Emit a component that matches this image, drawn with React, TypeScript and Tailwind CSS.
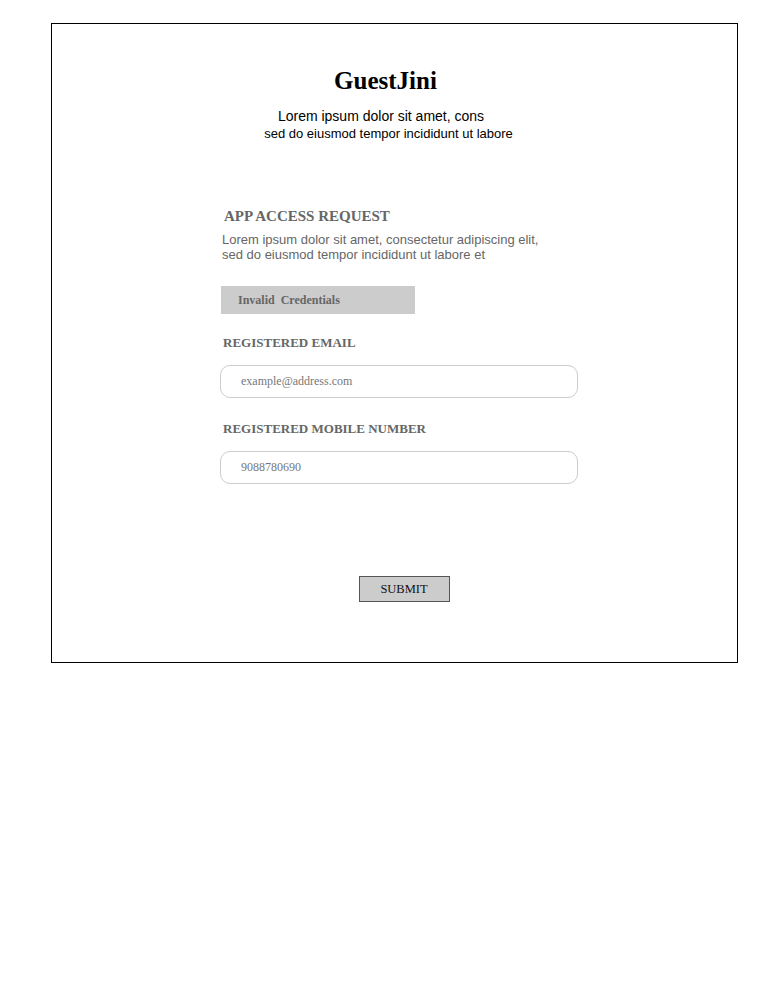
import React from 'react';

export default function App() {
  return (
    <div className="w-[783px] h-[1000px] bg-white pt-[23px] pl-[51px]">
      <div className="w-[687px] h-[640px] border border-black flex flex-col">
        <div className="flex flex-col items-center pt-[41px] pr-[12px]">
          <h1 className="font-['Liberation_Serif',serif] font-bold text-[25px] leading-[32px] text-black ml-[-6px]">GuestJini</h1>
          <p className="font-['Liberation_Sans',sans-serif] text-[14px] leading-[18px] mt-[10px] text-black ml-[-15px]">Lorem ipsum dolor sit amet, cons</p>
          <p className="font-['Liberation_Sans',sans-serif] text-[13px] leading-[18px] text-black">sed do eiusmod tempor incididunt ut labore</p>
        </div>

        <div className="flex flex-col pl-[168px] pt-[64px]">
          <h2 className="font-['Liberation_Serif',serif] font-bold text-[15px] leading-[18px] text-[#666] ml-[4px]">APP ACCESS REQUEST</h2>
          <p className="font-['Liberation_Sans',sans-serif] text-[13px] leading-[15px] text-[#666] mt-[7px] ml-[2px]">
            Lorem ipsum dolor sit amet, consectetur adipiscing elit,<br />
            sed do eiusmod tempor incididunt ut labore et
          </p>
          <div className="w-[194px] h-[28px] bg-[#ccc] mt-[24px] ml-[1px] flex items-center pl-[17px]">
            <span className="font-['Liberation_Serif',serif] font-bold text-[12px] text-[#666] whitespace-pre">Invalid  Credentials</span>
          </div>

          <label className="font-['Liberation_Serif',serif] font-bold text-[13px] leading-[16px] text-[#666] mt-[21px] ml-[3px]">REGISTERED EMAIL</label>
          <input
            className="w-[358px] h-[33px] mt-[14px] rounded-[10px] border border-[#ccc] pl-[20px] font-['Liberation_Serif',serif] text-[12px] text-[#777] placeholder:text-[#777] outline-none"
            placeholder="example@address.com"
          />

          <label className="font-['Liberation_Serif',serif] font-bold text-[13px] leading-[16px] text-[#666] mt-[23px] ml-[3px]">REGISTERED MOBILE NUMBER</label>
          <input
            className="w-[358px] h-[33px] mt-[14px] rounded-[10px] border border-[#ccc] pl-[20px] font-['Liberation_Serif',serif] text-[12px] text-[#777] placeholder:text-[#777] outline-none"
            placeholder="9088780690"
          />
        </div>

        <div className="flex justify-center pt-[92px] pl-[19px]">
          <button className="w-[91px] h-[26px] bg-[#ccc] border border-[#555] font-['Liberation_Serif',serif] text-[12.5px] text-[#111]">SUBMIT</button>
        </div>
      </div>
    </div>
  );
}
